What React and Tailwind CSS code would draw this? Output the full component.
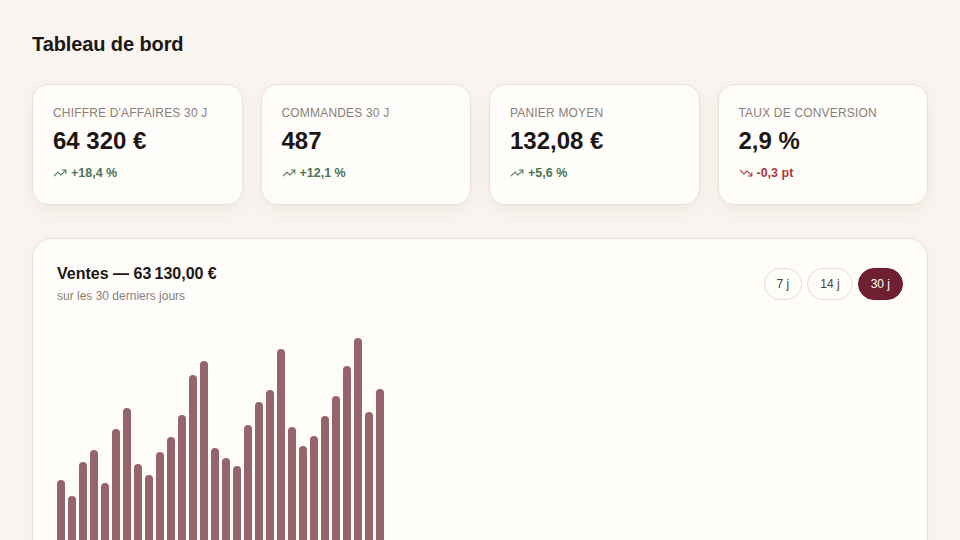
import React from 'react';
import { TrendingUp, TrendingDown } from 'lucide-react';

const kpis = [
  { label: "Chiffre d'affaires 30 j", value: '64 320 €', delta: '+18,4 %', up: true },
  { label: 'Commandes 30 j', value: '487', delta: '+12,1 %', up: true },
  { label: 'Panier moyen', value: '132,08 €', delta: '+5,6 %', up: true },
  { label: 'Taux de conversion', value: '2,9 %', delta: '-0,3 pt', up: false },
];

const tops = [480, 496, 462, 450, 483, 429, 408, 464, 475, 452, 437, 415, 375, 361, 448, 458, 466, 425, 402, 390, 349, 427, 446, 436, 416, 396, 366, 338, 412, 389];
const bars = tops.map(t => 578 - t);

const KpiCard = ({ label, value, delta, up }) => (
  <div className="bg-[#fffdfa] border border-[#ebe0d3] rounded-2xl px-5 pt-5 pb-[21px] shadow-[0_6px_16px_rgba(90,60,30,0.06)]">
    <div className="text-xs leading-4 uppercase tracking-[0.015em] text-[#8a7f78]">{label}</div>
    <div className="mt-1 text-2xl leading-8 font-bold text-[#1c1714]">{value}</div>
    <div className={`mt-1.5 h-5 flex items-center gap-1 text-[12.5px] font-bold ${up ? 'text-[#4b7452]' : 'text-[#a8393c]'}`}>
      {up ? <TrendingUp size={14} strokeWidth={1.75} /> : <TrendingDown size={14} strokeWidth={1.75} />}
      <span>{delta}</span>
    </div>
  </div>
);

export default function App() {
  return (
    <div className="min-h-screen bg-[#f8f4ef] px-8 pt-[30px] pb-8 font-['Liberation_Sans',Arial,sans-serif] text-[#1c1714]">
      <h1 className="text-xl leading-7 font-bold tracking-[-0.005em]">Tableau de bord</h1>

      <div className="mt-[26px] grid grid-cols-4 gap-[18px]">
        {kpis.map(k => <KpiCard key={k.label} {...k} />)}
      </div>

      <div className="mt-[33px] bg-[#fffdfa] border border-[#ebe0d3] rounded-[20px] px-6 pt-[25px] pb-6 shadow-[0_6px_16px_rgba(90,60,30,0.05)]">
        <div className="flex items-center justify-between">
          <div>
            <div className="text-base leading-5 font-bold">Ventes — 63{'\u202f'}130,00 €</div>
            <div className="mt-1 text-xs leading-4 text-[#8a7f78]">sur les 30 derniers jours</div>
          </div>
          <div className="flex items-center gap-[5px]">
            <button className="h-8 px-3 rounded-full border border-[#e8ddd0] text-xs text-[#4a3f3a]">7 j</button>
            <button className="h-8 px-3 rounded-full border border-[#e8ddd0] text-xs text-[#4a3f3a]">14 j</button>
            <button className="h-8 px-3 rounded-full border border-[#6e1f30] bg-[#6e1f30] text-xs text-white">30 j</button>
          </div>
        </div>

        <div className="mt-[34px] h-[240px] flex items-end gap-[3px]">
          {bars.map((h, i) => (
            <div key={i} className="w-2 rounded-full bg-[#96646b]" style={{ height: h }} />
          ))}
        </div>
      </div>
    </div>
  );
}
